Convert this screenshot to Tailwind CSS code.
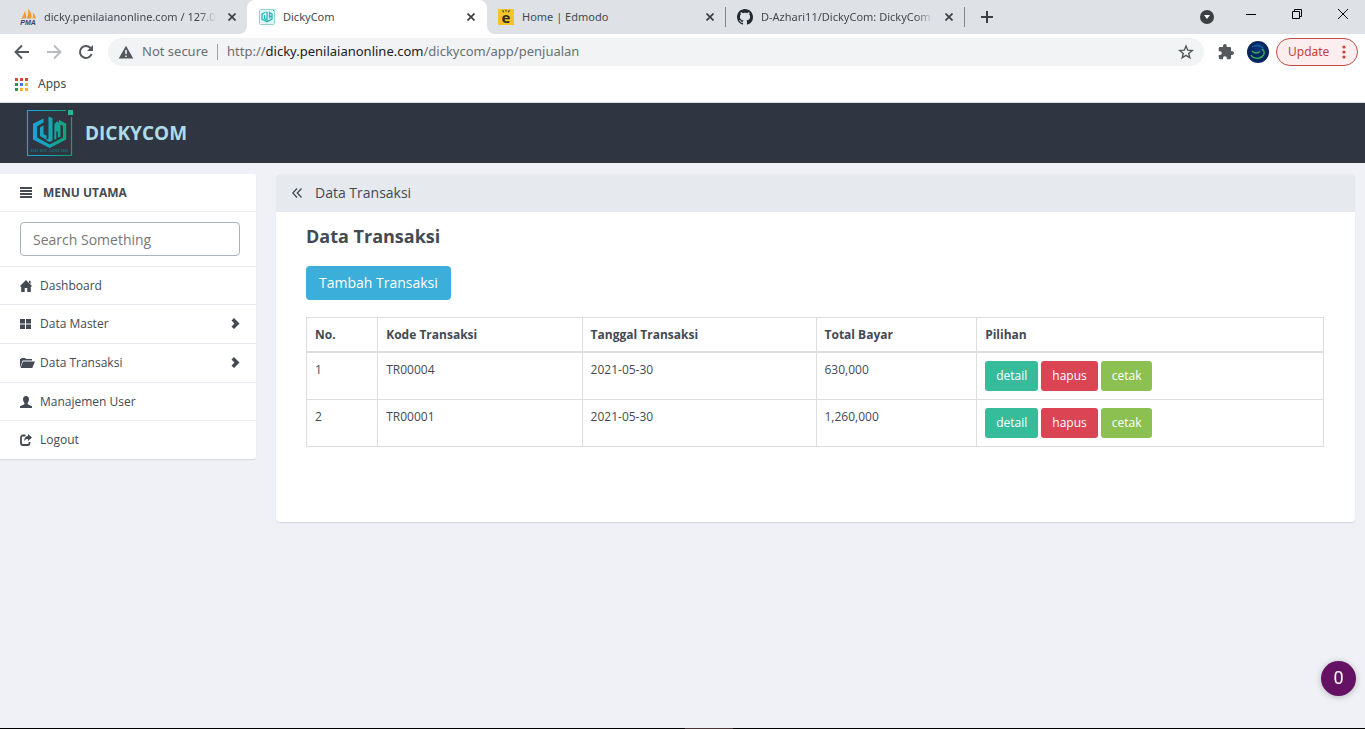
<!DOCTYPE html>
<html lang="id">
<head>
<meta charset="utf-8">
<title>DickyCom</title>
<script src="https://cdn.jsdelivr.net/npm/@tailwindcss/browser@4"></script>
</head>
<body class="flex min-h-screen flex-col bg-[#f0f1f6] font-['Open_Sans',sans-serif] text-[#434a54]">

<!-- Browser tab strip -->
<div class="flex h-[34px] items-stretch bg-[#dee1e6] pl-2 font-['Noto_Sans',sans-serif] text-[11px] text-[#45494d]">
  <div class="flex w-[239px] items-center gap-2 pr-[7px] pl-3">
    <svg class="size-4 shrink-0" viewBox="0 0 16 16" aria-hidden="true">
      <path d="M1 9.500C3 8 4 5 4.500 2c1.500 2 2 5 1.500 7.500zM6.500 9.500C8.500 6 8.500 3 8 0c3 2 4 6 3.500 9.500zM12.300 9.500c.9-2 .9-4 .3-6 2 1.500 3 4 3.100 6z" fill="#f29a34"/>
      <text x="8" y="15.500" font-family="Liberation Sans" font-size="7" font-weight="bold" font-style="italic" text-anchor="middle" fill="#3b3f6b">PMA</text>
    </svg>
    <span class="flex-1 overflow-hidden whitespace-nowrap mask-r-from-90%">dicky.penilaianonline.com / 127.0</span>
    <button class="grid size-4 shrink-0 place-items-center" aria-label="Close tab"><svg class="size-2" viewBox="0 0 8 8" stroke="#3c4043" stroke-width="1.700"><path d="M.5.5l7 7M7.500.5l-7 7"/></svg></button>
  </div>
  <div class="relative flex w-60 items-center gap-2 rounded-t-lg bg-white pr-2 pl-3">
    <svg class="absolute right-full bottom-0 size-2" viewBox="0 0 8 8" fill="#fff"><path d="M8 0v8H0a8 8 0 0 0 8-8z"/></svg>
    <svg class="absolute bottom-0 left-full size-2" viewBox="0 0 8 8" fill="#fff"><path d="M0 0v8h8a8 8 0 0 1-8-8z"/></svg>
    <svg class="size-4 shrink-0" viewBox="0 0 16 16" fill="none" aria-hidden="true">
      <rect x=".5" y=".5" width="15" height="15" rx="1" fill="#e0f6f4" stroke="#8fd2cb"/>
      <path d="M6 3.500L3 5v5l5 2.800L13 10V5l-2.500-1.500v6M10.500 7.500H13M5.500 6v3.500L8 11V3.500L6.500 3" stroke="#2ab5b8" stroke-width="1.300"/>
      <path d="M14 1h1v1h-1z" fill="#18a17b"/>
    </svg>
    <span class="flex-1 overflow-hidden whitespace-nowrap">DickyCom</span>
    <button class="grid size-4 shrink-0 place-items-center" aria-label="Close tab"><svg class="size-2" viewBox="0 0 8 8" stroke="#3c4043" stroke-width="1.700"><path d="M.5.5l7 7M7.500.5l-7 7"/></svg></button>
  </div>
  <div class="relative flex w-[238px] items-center gap-2 pr-[7px] pl-[11px]">
    <svg class="size-4 shrink-0" viewBox="0 0 16 16" aria-hidden="true">
      <path d="M0 0h16v16H0z" fill="#f5c32c"/>
      <path d="M4.600 1.200l1 2M8 .8v2M11.400 1.200l-1 2" stroke="#333" stroke-width="1.100"/>
      <text x="8" y="13.500" font-family="Open Sans" font-size="15" font-weight="bold" text-anchor="middle" fill="#2f2c22">e</text>
    </svg>
    <span class="flex-1 overflow-hidden whitespace-nowrap">Home | Edmodo</span>
    <button class="grid size-4 shrink-0 place-items-center" aria-label="Close tab"><svg class="size-2" viewBox="0 0 8 8" stroke="#3c4043" stroke-width="1.700"><path d="M.5.5l7 7M7.500.5l-7 7"/></svg></button>
  </div>
  <span class="h-5 w-px shrink-0 self-center bg-[#84878b]"></span>
  <div class="flex w-[238px] items-center gap-2 pr-[7px] pl-[11px]">
    <svg class="size-4 shrink-0" viewBox="0 0 16 16" fill="#24292e" aria-hidden="true"><path d="M8 0C3.580 0 0 3.580 0 8c0 3.540 2.290 6.530 5.470 7.590.4.070.55-.17.55-.38 0-.19-.01-.82-.01-1.490-2.010.37-2.530-.49-2.690-.94-.09-.23-.48-.94-.82-1.130-.28-.15-.68-.52-.01-.53.63-.01 1.080.58 1.230.82.720 1.210 1.870.87 2.330.66.070-.52.280-.87.510-1.070-1.780-.2-3.640-.89-3.640-3.950 0-.87.310-1.590.82-2.150-.08-.2-.36-1.020.080-2.120 0 0 .67-.21 2.200.82.640-.18 1.320-.27 2-.27s1.360.09 2 .27c1.530-1.040 2.200-.82 2.200-.82.440 1.100.16 1.920.080 2.120.51.560.82 1.270.82 2.150 0 3.070-1.870 3.750-3.650 3.950.29.250.54.730.54 1.480 0 1.070-.01 1.930-.01 2.200 0 .21.15.46.55.38A8.010 8.010 0 0 0 16 8c0-4.420-3.580-8-8-8z"/></svg>
    <span class="flex-1 overflow-hidden whitespace-nowrap mask-r-from-90%">D-Azhari11/DickyCom: DickyCom</span>
    <button class="grid size-4 shrink-0 place-items-center" aria-label="Close tab"><svg class="size-2" viewBox="0 0 8 8" stroke="#3c4043" stroke-width="1.700"><path d="M.5.5l7 7M7.500.5l-7 7"/></svg></button>
  </div>
  <span class="h-5 w-px shrink-0 self-center bg-[#84878b]"></span>
  <button class="ml-2 grid w-7 place-items-center" aria-label="New tab"><svg class="size-3" viewBox="0 0 12 12" stroke="#3c4043" stroke-width="2"><path d="M6 0v12M0 6h12"/></svg></button>
  <div class="ml-auto flex">
    <button class="mr-[13px] grid w-4 place-items-center" aria-label="Search tabs"><svg class="size-3.5" viewBox="0 0 14 14"><circle cx="7" cy="7" r="7" fill="#3c4043"/><path d="M4 5h6L7 9z" fill="#fff"/></svg></button>
    <button class="grid h-7 w-[46px] place-items-center" aria-label="Minimize"><svg class="h-px w-2.5"><path d="M0 0h10v1H0z"/></svg></button>
    <button class="grid h-7 w-[46px] place-items-center" aria-label="Restore"><svg class="size-2.5" viewBox="0 0 10 10" fill="none" stroke="#000"><path d="M.5 2.500h7v7h-7zM2.500 2.500v-2h7v7h-2"/></svg></button>
    <button class="grid h-7 w-[45px] place-items-center" aria-label="Close"><svg class="size-2.5" viewBox="0 0 10 10" stroke="#000"><path d="M0 0l10 10M10 0L0 10"/></svg></button>
  </div>
</div>

<!-- Browser toolbar -->
<div class="flex h-9 items-center bg-white pr-[7px] pl-3.5 font-['Noto_Sans',sans-serif]">
  <button aria-label="Back"><svg class="size-4" viewBox="0 0 16 16" fill="none" stroke="#54585d" stroke-width="1.900"><path d="M15 8H2M8 1.500L1.500 8 8 14.500"/></svg></button>
  <button class="ml-4" aria-label="Forward"><svg class="size-4" viewBox="0 0 16 16" fill="none" stroke="#b9bbbe" stroke-width="1.900"><path d="M1 8h13M8 1.500L14.500 8 8 14.500"/></svg></button>
  <button class="ml-4" aria-label="Reload"><svg class="size-4" viewBox="0 0 16 16" fill="none" stroke="#54585d" stroke-width="2"><path d="M13.600 10A6 6 0 1 1 12.300 3.800L14 5.500"/><path d="M15 1v6H9z" fill="#54585d" stroke="none"/></svg></button>
  <div class="ml-3.5 flex h-7 flex-1 items-center rounded-full bg-[#f1f3f4] px-2.5">
    <svg class="h-3.5 w-4" viewBox="0 0 16 14" aria-hidden="true"><path d="M8 .8l7.300 12.700H.7z" fill="#54585d"/><path d="M7.200 5h1.600v4H7.200zM7.200 10.400h1.600V12H7.200z" fill="#f1f3f4"/></svg>
    <span class="ml-2 w-[67px] whitespace-nowrap text-[13px] text-[#6a6e73]">Not secure</span>
    <span class="ml-2 h-4 w-px bg-[#a0a3a7]"></span>
    <span class="ml-[9px] flex-1 whitespace-nowrap text-[13px] text-[#6a6e73]">http://<span class="text-[#202124]">dicky.penilaianonline.com</span>/dickycom/app/penjualan</span>
    <button aria-label="Bookmark"><svg class="size-4" viewBox="0 0 16 16" fill="none" stroke="#54585d" stroke-width="1.400"><path d="M8 2l1.700 4.200 4.500.3-3.500 2.900 1.100 4.400L8 11.400l-3.800 2.400 1.100-4.400-3.500-2.900 4.500-.3z"/></svg></button>
  </div>
  <button class="ml-3.5" aria-label="Extensions"><svg class="size-4" viewBox="1 1 22 22" fill="#54585d"><path d="M20.500 11H19V7a2 2 0 0 0-2-2h-4V3.500a2.500 2.500 0 0 0-5 0V5H4a2 2 0 0 0-2 2v3.800h1.500a2.700 2.700 0 0 1 0 5.400H2V20a2 2 0 0 0 2 2h3.800v-1.500a2.700 2.700 0 0 1 5.400 0V22H17a2 2 0 0 0 2-2v-4h1.500a2.500 2.500 0 0 0 0-5z"/></svg></button>
  <button class="ml-[13px]" aria-label="Profile"><svg class="size-[22px]" viewBox="0 0 22 22" fill="none"><circle cx="11" cy="11" r="11" fill="#06265f"/><circle cx="12" cy="7" r="5" fill="#0a3479"/><path d="M5 10c2 2.500 6 2.500 8 .5M15 8c4 3 2 8-3 9-4 .6-7-1-8-3" stroke="#35ad5a" stroke-width="1.500"/><path d="M5 6c3-2 8-2 11 1" stroke="#1f70a8"/></svg></button>
  <button class="ml-[7px] flex h-7 w-[82px] items-center justify-between rounded-full border border-[#c04a44] bg-[#fceeee] px-[11px] text-xs text-[#c5403a]">Update
    <svg class="h-3.5 w-1" viewBox="0 0 4 14" fill="#c5403a"><circle cx="2" cy="2" r="1.600"/><circle cx="2" cy="7" r="1.600"/><circle cx="2" cy="12" r="1.600"/></svg>
  </button>
</div>

<!-- Bookmarks bar -->
<div class="flex h-[33px] items-center border-b border-[#dcdee2] bg-white pb-1 pl-[15px] font-['Noto_Sans',sans-serif]">
  <a href="#" class="flex items-center gap-2.5 text-xs text-[#45494d]">
    <svg class="size-[13px]" viewBox="0 0 13 13" aria-hidden="true"><path d="M0 0h3v3H0zM5 0h3v3H5zM10 0h3v3h-3z" fill="#d8453a"/><path d="M0 5h3v3H0zM0 10h3v3H0z" fill="#2e9556"/><path d="M5 5h3v3H5z" fill="#3c7be0"/><path d="M10 5h3v3h-3zM5 10h3v3H5zM10 10h3v3h-3z" fill="#e9b434"/></svg>
    Apps
  </a>
</div>

<!-- Site header -->
<header class="flex h-[60px] items-center gap-3 bg-[#2f3641] pl-[26px]">
  <svg class="h-12 w-[47px]" viewBox="0 0 47 48" fill="none" aria-hidden="true">
    <defs><linearGradient id="brand" gradientUnits="userSpaceOnUse" x1="4" y1="0" x2="43" y2="0"><stop stop-color="#1b9fe0"/><stop offset=".5" stop-color="#14a8b4"/><stop offset="1" stop-color="#0fa36a"/></linearGradient></defs>
    <path d="M40 1.500H1.500v45h44V8" stroke="url(#brand)" stroke-width="1.200"/>
    <path d="M42 1h5v5h-5z" fill="#22b89a"/>
    <path d="M17.500 9.500v4L11 17.200v11.300l12.700 6.900L37 28.500V17l-4-2.300v-3.900l7.200 4V30.500L23.700 39 7 30.500V14.800z" fill="url(#brand)"/>
    <path d="M14 18.500l3.500-2.200v8.800l3 1.700v4L14 27zM22.500 7.500l4 1.800v22.200l-3 1.500-3.500-2 2.500-1.500zM28.500 15l2.700-2.700 3.300 2.700v12.500l-2.700 1.600v-6.600h-1.500v7.200l-2 1z" fill="url(#brand)"/>
    <text x="23.500" y="43" font-family="Liberation Serif" font-size="5" font-weight="bold" text-anchor="middle" fill="#1c6f78">DICKY AZHARI</text>
  </svg>
  <a href="#" class="text-[19px] leading-7 font-bold text-[#addce9]">DICKYCOM</a>
</header>

<div class="flex items-start gap-5 pt-[11px] pr-2.5">
  <!-- Sidebar -->
  <nav class="w-64 shrink-0 rounded-r-xs bg-white text-xs shadow-[0_1px_1px_#d5d8de]">
    <div class="flex h-[38px] items-center gap-[11px] border-b border-[#e6e9ed] pl-5 font-bold">
      <svg class="h-3 w-3" viewBox="0 0 12 12" fill="#434a54" aria-hidden="true"><path d="M0 0h12v2H0zM0 3h12v2H0zM0 6h12v2H0zM0 9h12v2H0z"/></svg>
      MENU UTAMA
    </div>
    <div class="border-b border-[#e6e9ed] py-2.5 pr-4 pl-5">
      <input type="text" aria-label="Search" placeholder="Search Something" class="block h-[34px] w-full rounded-sm border border-[#aab2bd] px-3 text-sm placeholder:text-[#777]">
    </div>
    <a href="#" class="flex h-[38px] items-center border-b border-[#e6e9ed] pr-4 pl-5">
      <svg class="mr-2 size-3" viewBox="0 0 12 12" fill="#434a54" aria-hidden="true"><path d="M6 0l6.500 6.500h-1.700V12H7.300V8H4.700v4H1.200V6.500H-.5z"/><path d="M9 .8h1.500v3.500L9 2.800z"/></svg>
      Dashboard
    </a>
    <a href="#" class="flex h-[39px] items-center border-b border-[#e6e9ed] pr-4 pl-5">
      <svg class="mr-2 size-3" viewBox="0 0 12 12" fill="#434a54" aria-hidden="true"><path d="M0 1h5v4.500H0zM6 1h5v4.500H6zM0 6.500h5V11H0zM6 6.500h5V11H6z"/></svg>
      Data Master
      <svg class="ml-auto h-3 w-[9px]" viewBox="0 0 9 12" fill="#434a54" aria-hidden="true"><path d="M3 0l5.500 5.500L3 11 .5 8.500l3-3-3-3z"/></svg>
    </a>
    <a href="#" class="flex h-[39px] items-center border-b border-[#e6e9ed] pr-4 pl-5">
      <svg class="mr-[5px] h-3 w-[15px]" viewBox="0 0 15 12" fill="#434a54" aria-hidden="true"><path d="M0 10V2h1l.7-1h3.500l.8 1h6v1.500H2.500L.8 9z"/><path d="M3 4.500h12L12.300 11H.6z"/></svg>
      Data Transaksi
      <svg class="ml-auto h-3 w-[9px]" viewBox="0 0 9 12" fill="#434a54" aria-hidden="true"><path d="M3 0l5.500 5.500L3 11 .5 8.500l3-3-3-3z"/></svg>
    </a>
    <a href="#" class="flex h-[38px] items-center border-b border-[#e6e9ed] pr-4 pl-5">
      <svg class="mr-2 size-3" viewBox="0 0 12 12" fill="#434a54" aria-hidden="true"><path d="M6 0c2 0 3 1.300 3 3.300C9 5 8.300 6 7.600 6.900v1.300L12 10.300V12H0v-1.700l4.400-2.100V6.900C3.700 6 3 5 3 3.300 3 1.300 4 0 6 0z"/></svg>
      Manajemen User
    </a>
    <a href="#" class="flex h-[38px] items-center pr-4 pl-5">
      <svg class="mr-2 size-3" viewBox="0 0 12 12" fill="none" aria-hidden="true"><path d="M5.500 1.500H3A2 2 0 0 0 1 3.500V9a2 2 0 0 0 2 2h4.500a2 2 0 0 0 2-2V8" stroke="#434a54" stroke-width="1.800"/><path d="M8 0l4 3.500L8 7V5C6 5 5 5.500 4.200 7.500 4.200 4 5.500 2.200 8 2z" fill="#434a54"/></svg>
      Logout
    </a>
  </nav>

  <!-- Content panel -->
  <main class="min-w-0 flex-1 rounded-sm bg-white shadow-[0_1px_1px_#d5d8de]">
    <div class="flex h-[38px] items-center gap-[13px] rounded-t-sm bg-[#e6e9ed] pl-4 text-sm">
      <button aria-label="Back"><svg class="h-2.5 w-2.5" viewBox="0 0 10 10" fill="none" stroke="#434a54" stroke-width="1.300"><path d="M5 .5L.8 5 5 9.500M9.500.5L5.300 5l4.200 4.500"/></svg></button>
      Data Transaksi
    </div>
    <div class="px-[30px] pt-3 pb-[75px]">
      <h1 class="text-lg leading-[25px] font-bold">Data Transaksi</h1>
      <button class="mt-[17px] block h-[34px] rounded-sm bg-[#3bafda] px-[13px] text-sm text-white">Tambah Transaksi</button>
      <table class="mt-[17px] w-[calc(100%-1px)] table-fixed border-collapse text-left text-xs leading-[18px] [&_td]:border [&_td]:border-[#dddddd] [&_td]:p-2 [&_td]:align-top [&_th]:border [&_th]:border-b-2 [&_th]:border-[#dddddd] [&_th]:px-2 [&_th]:pt-2 [&_th]:pb-[7px]">
        <colgroup><col class="w-[7%]"><col class="w-[20.1%]"><col class="w-[23%]"><col class="w-[15.8%]"><col></colgroup>
        <thead><tr><th>No.</th><th>Kode Transaksi</th><th>Tanggal Transaksi</th><th>Total Bayar</th><th>Pilihan</th></tr></thead>
        <tbody>
          <tr><td>1</td><td>TR00004</td><td>2021-05-30</td><td>630,000</td>
            <td><div class="flex gap-[3px] text-white">
              <button class="h-[30px] rounded-[3px] bg-[#37bc9b] px-[11px]">detail</button>
              <button class="h-[30px] rounded-[3px] bg-[#da4453] px-[11px]">hapus</button>
              <button class="h-[30px] rounded-[3px] bg-[#8cc152] px-[11px]">cetak</button></div></td></tr>
          <tr><td>2</td><td>TR00001</td><td>2021-05-30</td><td>1,260,000</td>
            <td><div class="flex gap-[3px] text-white">
              <button class="h-[30px] rounded-[3px] bg-[#37bc9b] px-[11px]">detail</button>
              <button class="h-[30px] rounded-[3px] bg-[#da4453] px-[11px]">hapus</button>
              <button class="h-[30px] rounded-[3px] bg-[#8cc152] px-[11px]">cetak</button></div></td></tr>
        </tbody>
      </table>
    </div>
  </main>
</div>

<button class="fixed right-[9px] bottom-[33px] size-[35px] rounded-full bg-[#661264] pb-0.5 font-['Roboto',sans-serif] text-lg leading-none text-white shadow-[0_1px_6px_#00000040]">0</button>
<div class="mt-auto flex h-px justify-center bg-black"><span class="ml-[52px] w-12 bg-[#4a3436]"></span></div>
</body>
</html>
